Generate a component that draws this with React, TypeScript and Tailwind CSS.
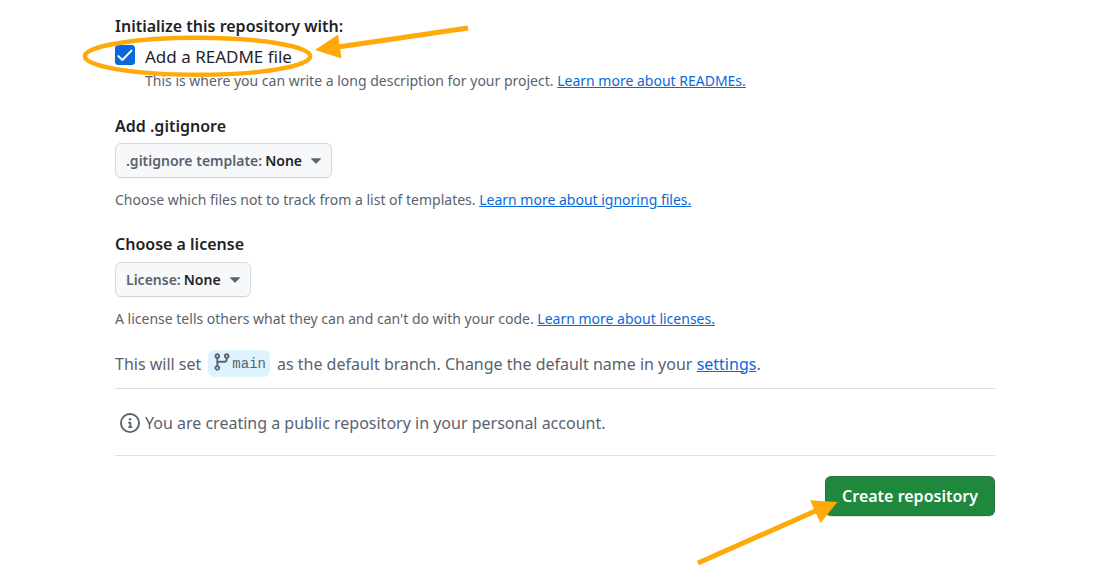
import React, { useState } from "react";

const link = "text-[#0969da] underline underline-offset-1";

function Hint({ text, linkText }: { text: string; linkText: string }) {
  return (
    <p className="text-[14px] leading-[22px] text-[#59636e]">
      {text}{" "}
      <a href="#learn" className={link}>
        {linkText}
      </a>
    </p>
  );
}

function Picker({ id, label }: { id: string; label: string }) {
  return (
    <div className="flex h-[35px] w-fit items-center rounded-md border border-[#d1d9e0] bg-[#f6f8fa] px-[10px] text-[14px] font-semibold shadow-[0_1px_0_rgba(31,35,40,0.04)]">
      <label htmlFor={id} className="text-[#59636e]">
        {label}
      </label>
      <select id={id} className="ml-[3px] appearance-none bg-transparent font-semibold text-[#1f2328]">
        <option>None</option>
      </select>
      <svg className="ml-[9px]" width="10" height="6" viewBox="0 0 10 6" fill="#59636e" aria-hidden="true">
        <path d="M0.4 0.3h9.2c.4 0 .6.4.3.7L5.4 5.500a.6.6 0 0 1-.8 0L.1 1C-.2.7 0 .3.4.3Z" />
      </svg>
    </div>
  );
}

export default function App() {
  const [readme, setReadme] = useState(true);
  return (
    <main className="relative bg-white pt-[14px] pr-[102px] pb-[50px] pl-[115px] font-['Noto_Sans',sans-serif] text-[16px] leading-6 text-[#1f2328]">
      <section>
        <h2 className="font-semibold">Initialize this repository with:</h2>
        <div className="mt-[7px] flex items-start gap-[10px]">
          <span className="relative block size-5 shrink-0">
            <input
              id="readme"
              type="checkbox"
              checked={readme}
              onChange={(e) => setReadme(e.target.checked)}
              className="peer block size-5 appearance-none rounded-[3px] border border-[#818b98] checked:border-[#0969da] checked:bg-[#0969da]"
            />
            <svg
              className="pointer-events-none absolute inset-0 hidden peer-checked:block"
              width="20"
              height="20"
              viewBox="0 0 20 20"
              fill="none"
              stroke="#fff"
              strokeWidth="1.800"
              strokeLinecap="round"
              strokeLinejoin="round"
              aria-hidden="true"
            >
              <path d="M3.200 11 7.400 15 16.600 5.500" />
            </svg>
          </span>
          <div>
            <label htmlFor="readme" className="block text-[17px]">
              Add a README file
            </label>
            <div className="mt-px">
              <Hint
                text="This is where you can write a long description for your project."
                linkText="Learn more about READMEs."
              />
            </div>
          </div>
        </div>
      </section>

      <section className="mt-[22px]">
        <h2 className="mb-[5px] font-semibold">Add .gitignore</h2>
        <Picker id="gitignore" label=".gitignore template:" />
        <div className="mt-[11px]">
          <Hint text="Choose which files not to track from a list of templates." linkText="Learn more about ignoring files." />
        </div>
      </section>

      <section className="mt-[21px]">
        <h2 className="mb-[6px] font-semibold">Choose a license</h2>
        <Picker id="license" label="License:" />
        <div className="mt-[11px]">
          <Hint text="A license tells others what they can and can't do with your code." linkText="Learn more about licenses." />
        </div>
      </section>

      <div className="mt-[20px] flex flex-wrap items-center border-b border-[#d1d9e0]/80 pb-[11px] text-[#59636e]">
        <span>This will set</span>
        <span className="mx-[7px] flex h-[27px] items-center rounded-md bg-[#ddf4ff] px-[4px]">
          <svg className="mb-[3px]" width="20" height="20" viewBox="0 0 16 16" fill="#59636e" aria-hidden="true">
            <path d="M9.5 3.25a2.25 2.25 0 1 1 3 2.122V6A2.5 2.5 0 0 1 10 8.5H6a1 1 0 0 0-1 1v1.128a2.251 2.251 0 1 1-1.5 0V5.372a2.25 2.25 0 1 1 1.5 0v1.836A2.493 2.493 0 0 1 6 7h4a1 1 0 0 0 1-1v-.628A2.25 2.25 0 0 1 9.5 3.25Zm-6 0a.75.75 0 1 0 1.5 0 .75.75 0 0 0-1.5 0Zm8.25-.75a.75.75 0 1 0 0 1.5.75.75 0 0 0 0-1.5ZM4.25 12a.75.75 0 1 0 0 1.5.75.75 0 0 0 0-1.5Z" />
          </svg>
          <code className="font-['Liberation_Mono',monospace] text-[14px]">main</code>
        </span>
        <span>
          as the default branch. Change the default name in your{" "}
          <a href="#settings" className={link}>
            settings
          </a>
          .
        </span>
      </div>

      <div className="flex items-center gap-[5px] border-b border-[#d1d9e0]/80 pt-[22px] pb-[20px] pl-[5px] text-[#59636e]">
        <svg width="20" height="20" viewBox="0 0 16 16" fill="#59636e" aria-hidden="true">
          <path d="M0 8a8 8 0 1 1 16 0A8 8 0 0 1 0 8Zm8-6.5a6.5 6.5 0 1 0 0 13 6.5 6.5 0 0 0 0-13ZM6.5 7.75A.75.75 0 0 1 7.25 7h1a.75.75 0 0 1 .75.75v2.75h.25a.75.75 0 0 1 0 1.5h-2a.75.75 0 0 1 0-1.5h.25v-2h-.25a.75.75 0 0 1-.75-.75ZM8 6a1 1 0 1 1 0-2 1 1 0 0 1 0 2Z" />
        </svg>
        <p>You are creating a public repository in your personal account.</p>
      </div>

      <div className="mt-5 flex justify-end">
        <div className="relative">
          <button
            type="button"
            className="h-10 rounded-md border border-[#1f2328]/15 bg-[#1f883d] px-4 font-semibold text-white shadow-[0_1px_0_rgba(31,35,40,0.1)]"
          >
            Create repository
          </button>
          <svg
            className="pointer-events-none absolute top-[20px] right-[155px]"
            width="145"
            height="70"
            viewBox="0 0 145 70"
            fill="#ffa90a"
            aria-hidden="true"
          >
            <path d="M3 67 125 13" stroke="#ffa90a" strokeWidth="5" />
            <path d="M142.500 6 115 4.300 125.500 27Z" />
          </svg>
        </div>
      </div>

      <svg
        className="pointer-events-none absolute top-[20px] left-[80px]"
        width="395"
        height="65"
        viewBox="0 0 395 65"
        fill="none"
        aria-hidden="true"
      >
        <ellipse cx="117.5" cy="36.300" rx="112.700" ry="18.500" stroke="#ffa90a" strokeWidth="4.400" />
        <path d="M388 8 258 27" stroke="#ffa90a" strokeWidth="5" />
        <path d="M235 30 258 14.500 261.500 38.500Z" fill="#ffa90a" />
      </svg>
    </main>
  );
}
